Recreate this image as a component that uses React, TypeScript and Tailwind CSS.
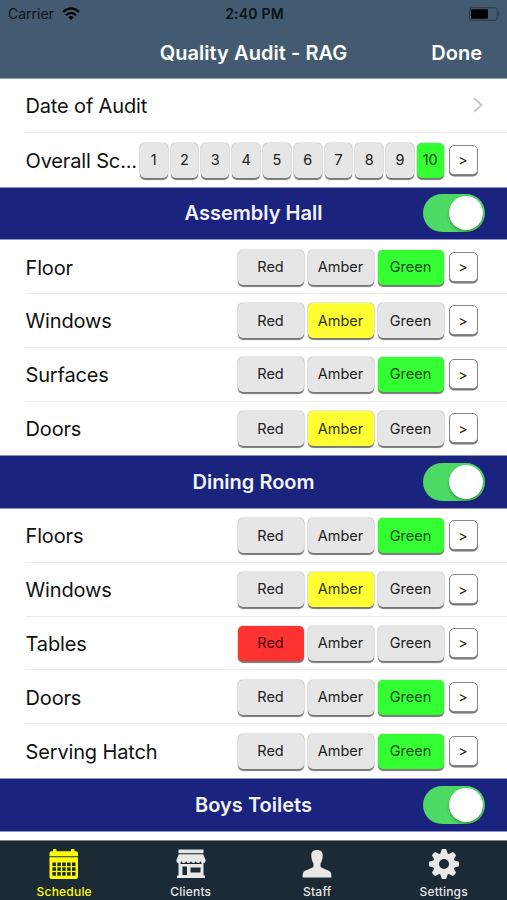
import React from "react";

type Rating = "Red" | "Amber" | "Green";

const RATINGS: Rating[] = ["Red", "Amber", "Green"];
const ACTIVE: Record<Rating, string> = {
  Red: "bg-[#ff3232] text-[#4a0d0d]",
  Amber: "bg-[#ffff33] text-[#333310]",
  Green: "bg-[#33ff33] text-[#0d4a0d]",
};
const KEY =
  "flex h-[35px] items-center justify-center rounded-[5px] pb-px text-[14.5px] shadow-[0_1.5px_1px_#777,0_0_1.5px_#888]";

function Row({ label, children, last = false }: { label: string; children: React.ReactNode; last?: boolean }) {
  return (
    <div className="h-[53.76px] bg-white pl-[25.5px]">
      <div className={`flex h-full items-center pr-[29.5px] pt-px ${last ? "" : "border-b border-[#ececec]"}`}>
        <span className="min-w-0 flex-1 whitespace-nowrap pt-px text-[20px] tracking-[-0.15px] text-[#111]">{label}</span>
        {children}
      </div>
    </div>
  );
}

function More() {
  return (
    <button className="mb-px ml-[5px] flex h-[30px] w-[29px] items-center justify-center rounded-[5px] border border-[#888] bg-white text-[14px] text-[#222] shadow-[0_1.5px_0.5px_#777]">
      &gt;
    </button>
  );
}

function RatingRow({ label, value, last }: { label: string; value: Rating; last?: boolean }) {
  return (
    <Row label={label} last={last}>
      <div className="flex gap-1">
        {RATINGS.map((r) => (
          <button key={r} className={`${KEY} w-[66px] ${r === value ? ACTIVE[r] : "bg-[#e6e6e6] text-[#222]"}`}>
            {r}
          </button>
        ))}
      </div>
      <More />
    </Row>
  );
}

function SectionHeader({ title }: { title: string }) {
  return (
    <div className="grid h-[53.76px] grid-cols-[1fr_auto_1fr] items-center border-y border-[#8d92c4] bg-[#1a237e] pr-[22px]">
      <span />
      <h2 className="pl-[22px] text-[20px] font-semibold text-[#f2f3fb]">{title}</h2>
      <div className="flex h-[38px] w-[62.5px] items-center justify-end justify-self-end rounded-full bg-[#4cd964] p-[2px]">
        <div className="size-[34px] rounded-full bg-white shadow-[0_2px_3px_#0004]" />
      </div>
    </div>
  );
}

function ScheduleIcon() {
  return (
    <svg viewBox="0 0 30 30" className="size-[30px]" fill="currentColor">
      <path d="M2.500 2.200H4V.7Q4 0 5 0H6.500Q7.500 0 7.500.7V2.200H22V.7Q22 0 23 0H24.500Q25.500 0 25.500.7V2.200H27Q29 2.200 29 4V7.300H.5V4Q.5 2.200 2.500 2.200ZM.5 8.300H29V28Q29 30 27 30H2.500Q.5 30 .5 28Z" />
      {[13.5, 18.3, 23.1].map((y) =>
        [3.4, 8.3, 13.2, 18.1, 23].map((x) => <rect key={`${x}-${y}`} x={x} y={y} width="3.500" height="3.600" fill="#1c2a35" />),
      )}
    </svg>
  );
}

function ClientsIcon() {
  return (
    <svg viewBox="0 0 30 30" className="size-[30px]" fill="currentColor">
      <path d="M2.500.5H27.500V4.200H2.500Z" />
      <path d="M2.800 5.200H27.200L29.700 11.200Q29.500 14 27.200 14Q25 14 24.700 12Q24.300 14 22.200 14Q20.200 14 19.800 12Q19.400 14 17.400 14Q15.300 14 15 12Q14.600 14 12.600 14Q10.500 14 10.200 12Q9.800 14 7.800 14Q5.700 14 5.300 12Q4.900 14 2.800 14Q.5 14 .3 11.200Z" />
      <path
        fillRule="evenodd"
        d="M2.500 12.500H4.500V15H25.500V12.500H27.500V26.500H29V29H1V26.500H2.500ZM6.500 17.500V26H11V17.500ZM14.500 18.500V23.500H24.500V18.500Z"
      />
    </svg>
  );
}

function StaffIcon() {
  return (
    <svg viewBox="0 0 30 30" className="size-[30px]" fill="currentColor">
      <path d="M15 1C19 1 21 3 20.700 7C20.500 10.500 19.500 13 18.500 14.500V17.500C19.500 19.500 27 21 28.500 23Q29.500 24.500 29.500 28.500H.5Q.5 24.500 1.500 23C3 21 10.500 19.500 11.500 17.500V14.500C10.500 13 9.500 10.500 9.300 7C9 3 11 1 15 1Z" />
    </svg>
  );
}

function SettingsIcon() {
  return (
    <svg viewBox="-15 -15 30 30" className="size-[30px]" fill="currentColor">
      <circle r="8" fill="none" stroke="currentColor" strokeWidth="6" />
      {[0, 45, 90, 135, 180, 225, 270, 315].map((a) => (
        <path key={a} transform={`rotate(${a})`} d="M-4-9L-2.500-14.200Q-2.300-14.900-1.500-14.900H1.500Q2.300-14.900 2.500-14.200L4-9Z" />
      ))}
    </svg>
  );
}

const TABS = [
  { name: "Schedule", Icon: ScheduleIcon, active: true },
  { name: "Clients", Icon: ClientsIcon, active: false },
  { name: "Staff", Icon: StaffIcon, active: false },
  { name: "Settings", Icon: SettingsIcon, active: false },
];

export default function App() {
  return (
    <div className="flex h-[900px] w-[507px] flex-col overflow-hidden bg-[#1c2a35] font-['Inter',sans-serif]">
      <header className="h-[79px] shrink-0 border-b border-[#8ba3ad] bg-[#435b70]">
        <div className="grid h-[27px] grid-cols-3 items-center pl-2 pr-[6px] text-[14px] text-[#0c1216]">
          <div className="flex items-center gap-2">
            <span>Carrier</span>
            <svg viewBox="0 0 18 13" className="h-[13px] w-[18px]" fill="none" stroke="#000" strokeWidth="2.300">
              <path d="M1 5Q9-2.300 17 5" />
              <path d="M4 8.200Q9 3.500 14 8.200" />
              <path d="M6.300 10.200Q9 7.600 11.700 10.200L9 12.900Z" fill="#000" stroke="none" />
            </svg>
          </div>
          <span className="text-center font-semibold tracking-[0.2px]">2:40 PM</span>
          <svg viewBox="0 0 32 14" className="h-[14px] w-[32px] justify-self-end">
            <rect x=".7" y=".7" width="27.500" height="12.600" rx="2.500" fill="none" stroke="#263946" />
            <rect x="2" y="2.300" width="17" height="9.400" rx="1" fill="#000" />
            <path d="M29.500 4.500Q32 7 29.500 9.500Z" fill="#263946" />
          </svg>
        </div>
        <div className="grid h-[51px] grid-cols-[1fr_auto_1fr] items-center pr-[25px] font-semibold text-white">
          <span />
          <h1 className="pl-[25px] text-[20px] tracking-[0.05px]">Quality Audit - RAG</h1>
          <span className="justify-self-end pt-px text-[20px]">Done</span>
        </div>
      </header>
      <main className="min-h-0 flex-1 overflow-hidden bg-white">
        <Row label="Date of Audit">
          <svg viewBox="0 0 10 16" className="-mr-[5px] mb-px h-[16px] w-[10px]" fill="none" stroke="#c7c7cc" strokeWidth="2">
            <path d="M1 1L8.500 8L1 15" />
          </svg>
        </Row>
        <Row label="Overall Sc..." last>
          <div className="flex gap-[3px]">
            {Array.from({ length: 10 }, (_, i) => i + 1).map((n) => (
              <button
                key={n}
                className={`${KEY} ${n === 10 ? "w-[26.500px] bg-[#33ff33] text-[#0d4a0d]" : "w-[27.800px] bg-[#e6e6e6] text-[#222]"}`}
              >
                {n}
              </button>
            ))}
          </div>
          <More />
        </Row>
        <SectionHeader title="Assembly Hall" />
        <RatingRow label="Floor" value="Green" />
        <RatingRow label="Windows" value="Amber" />
        <RatingRow label="Surfaces" value="Green" />
        <RatingRow label="Doors" value="Amber" last />
        <SectionHeader title="Dining Room" />
        <RatingRow label="Floors" value="Green" />
        <RatingRow label="Windows" value="Amber" />
        <RatingRow label="Tables" value="Red" />
        <RatingRow label="Doors" value="Green" />
        <RatingRow label="Serving Hatch" value="Green" last />
        <SectionHeader title="Boys Toilets" />
      </main>
      <nav className="grid h-[60.5px] shrink-0 grid-cols-4 border-t border-[#7b858b] bg-[#1c2a35] pl-px">
        {TABS.map(({ name, Icon, active }) => (
          <div key={name} className={`flex flex-col items-center pt-2 ${active ? "text-[#ffff00]" : "text-[#e8e8e8]"}`}>
            <Icon />
            <span className="mt-[5px] text-[12px] font-medium leading-4 tracking-[0.2px]">{name}</span>
          </div>
        ))}
      </nav>
    </div>
  );
}
